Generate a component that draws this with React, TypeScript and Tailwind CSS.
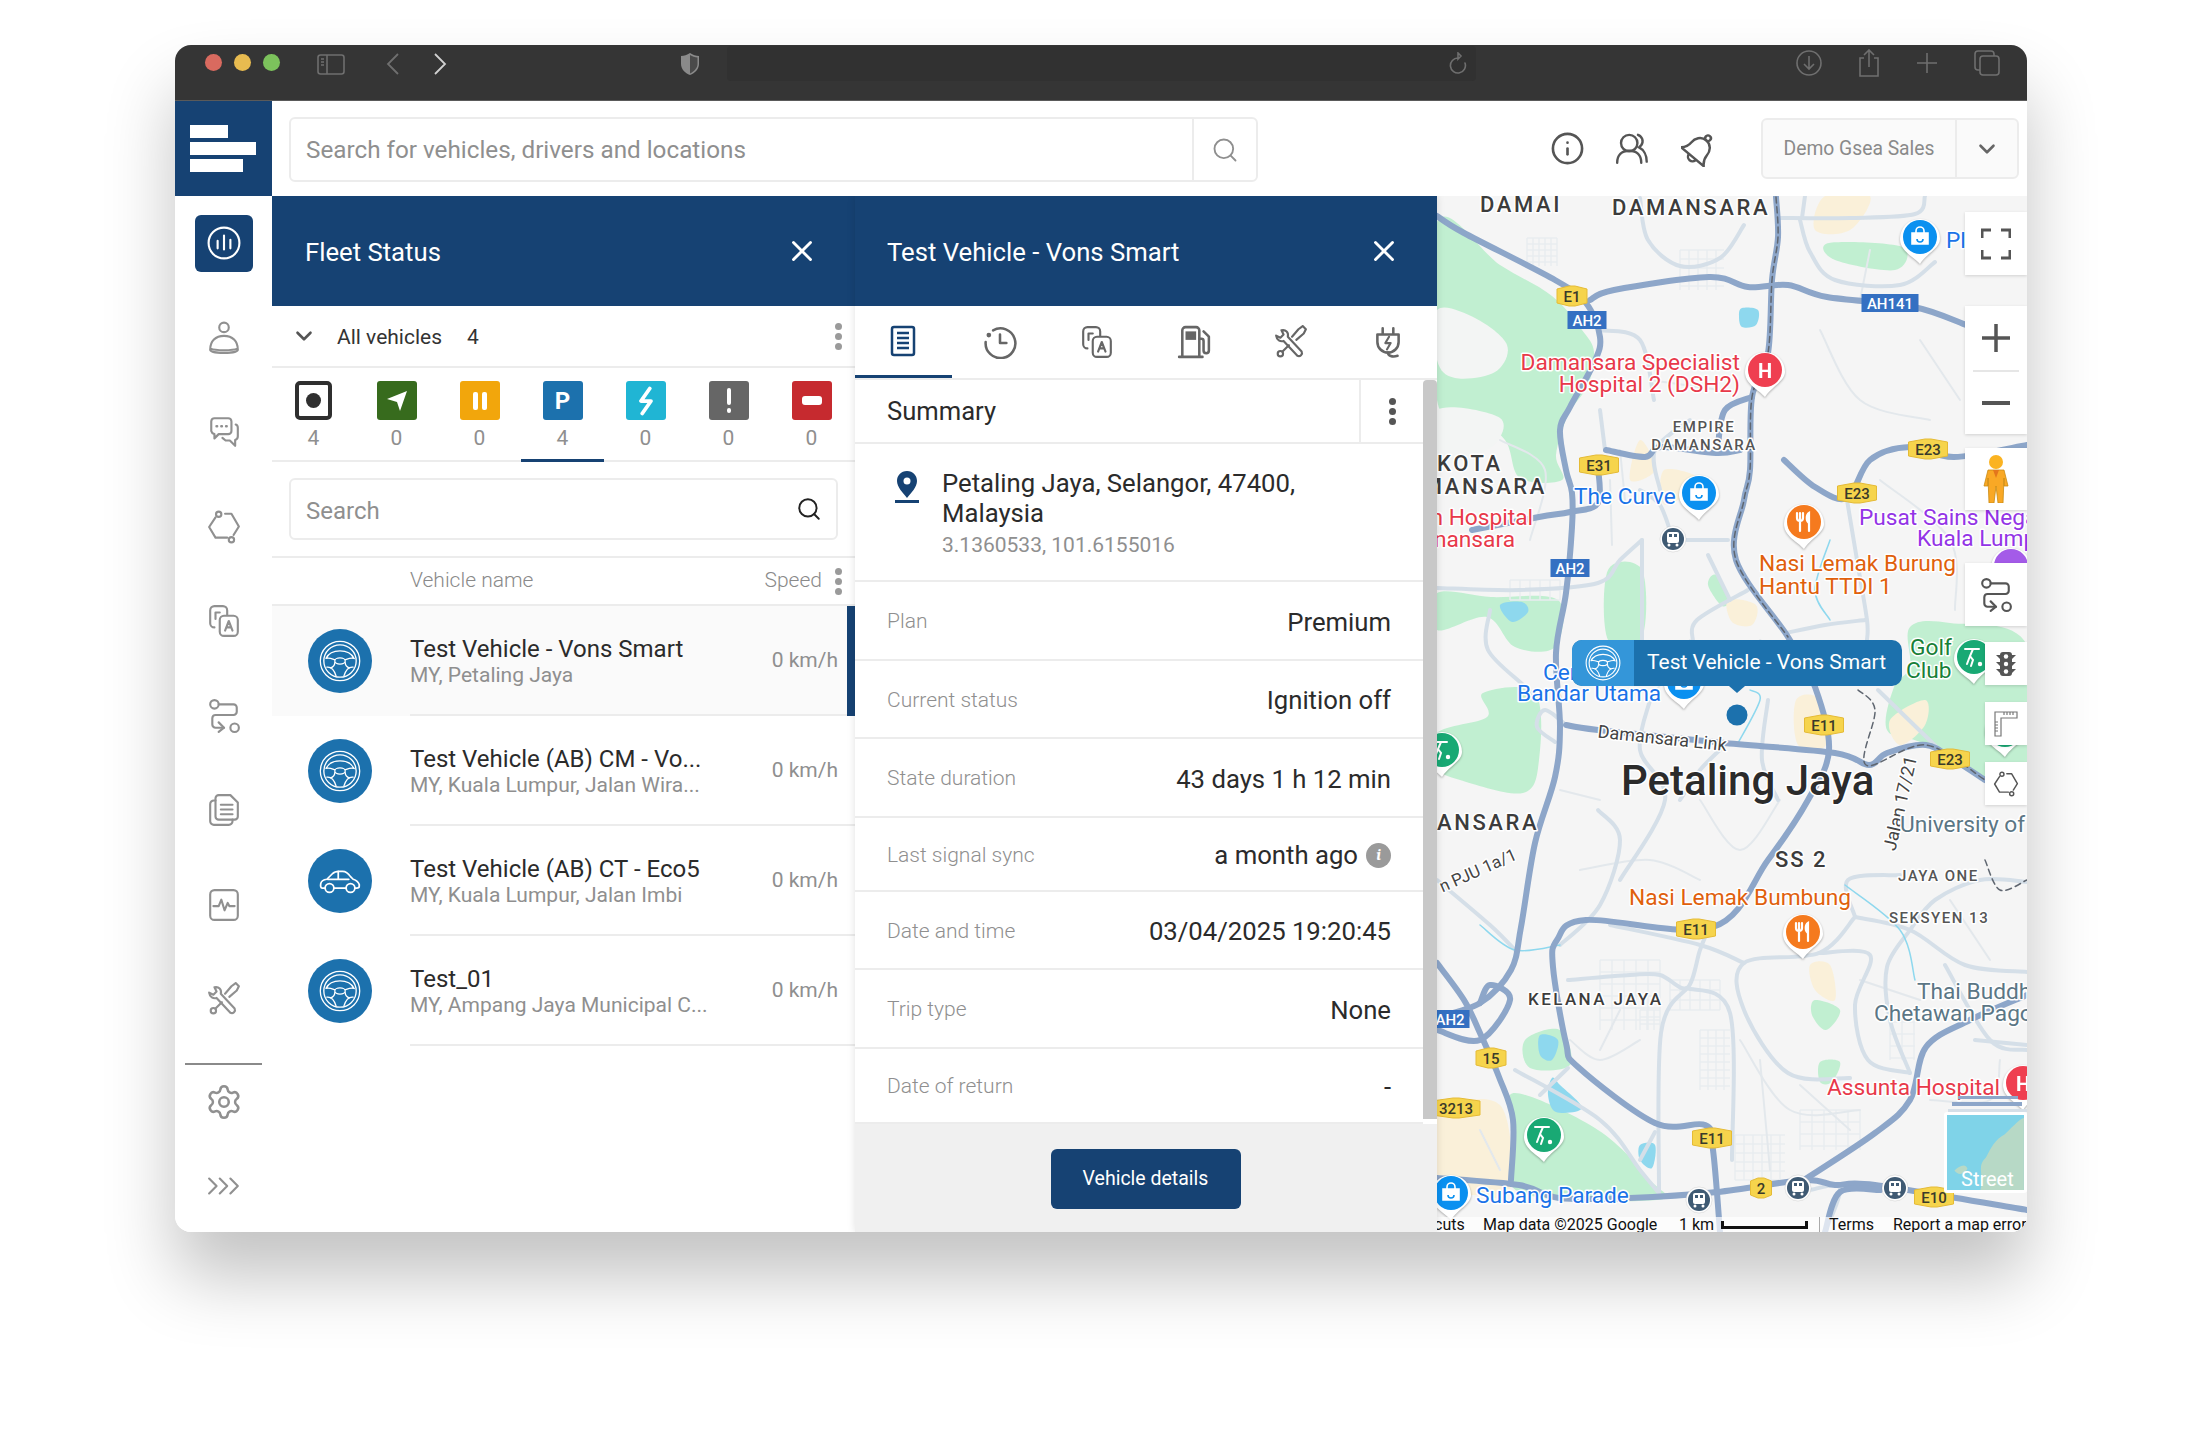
import { ChevronDown, Info, Search, Settings, X } from 'lucide-react';
import type { ReactNode } from 'react';

type Pt = [number, number];

// catmull-rom so the map roads don't look like polylines
const smooth = (p: Pt[], close = false) => {
  const pts = close ? [p[p.length - 1], ...p, p[0], p[1]] : [p[0], ...p, p[p.length - 1]];
  let d = `M${pts[1][0]} ${pts[1][1]}`;
  for (let i = 1; i < pts.length - 2; i++) {
    const [a, b, c, e] = [pts[i - 1], pts[i], pts[i + 1], pts[i + 2]];
    d += `C${b[0] + (c[0] - a[0]) / 6} ${b[1] + (c[1] - a[1]) / 6} ${c[0] - (e[0] - b[0]) / 6} ${c[1] - (e[1] - b[1]) / 6} ${c[0]} ${c[1]}`;
  }
  return d + (close ? 'Z' : '');
};

const greens: Pt[][] = [
  [[1437, 222], [1500, 265], [1552, 296], [1582, 330], [1594, 352], [1588, 385], [1568, 415], [1556, 455], [1562, 480], [1520, 478], [1505, 440], [1470, 412], [1437, 400]],
  [[1910, 627], [1950, 623], [2027, 645], [2027, 782], [1985, 780], [1922, 743], [1887, 730], [1894, 687], [1910, 667]],
  [[1437, 593], [1491, 597], [1558, 600], [1555, 647], [1515, 647], [1487, 617], [1437, 630]],
  [[1483, 693], [1535, 693], [1539, 760], [1523, 793], [1460, 780], [1437, 767], [1437, 733], [1487, 717]],
  [[1608, 570], [1642, 570], [1642, 637], [1608, 640]],
  [[1515, 1093], [1598, 1130], [1650, 1180], [1657, 1200], [1519, 1192], [1515, 1130]],
  [[1829, 243], [1902, 247], [1895, 270], [1835, 260]],
  [[1716, 575], [1730, 598], [1722, 606], [1708, 585]],
  [[1815, 1000], [1840, 1010], [1826, 1030], [1812, 1015]],
  [[1820, 1062], [1840, 1062], [1832, 1082], [1820, 1082]],
  [[1525, 1040], [1560, 1030], [1570, 1065], [1530, 1068]],
];

const blobs: Pt[][] = [
  [[1437, 310], [1475, 318], [1507, 345], [1495, 372], [1455, 378], [1437, 360]],
  [[1437, 410], [1500, 418], [1490, 448], [1437, 462]],
];

const water: Pt[][] = [
  [[1742, 308], [1758, 310], [1756, 325], [1742, 327], [1739, 316]],
  [[1500, 605], [1522, 602], [1528, 612], [1512, 622]],
  [[1552, 1078], [1560, 1085], [1582, 1108], [1556, 1112], [1548, 1095]],
  [[1540, 1035], [1558, 1040], [1552, 1060], [1540, 1055]],
  [[1640, 1145], [1655, 1145], [1652, 1168], [1640, 1160]],
];

const minorRoads: Pt[][] = [
  [[1640, 198], [1648, 240], [1680, 266], [1720, 258], [1744, 225]],
  [[1778, 218], [1850, 218], [1915, 214], [1925, 196]],
  [[1805, 196], [1802, 218]],
  [[1800, 220], [1810, 252], [1835, 280], [1900, 285], [1935, 262]],
  [[1673, 540], [1728, 540]],
  [[1642, 540], [1620, 560], [1598, 583], [1520, 590], [1437, 588]],
  [[1673, 540], [1660, 505], [1640, 490]],
  [[1748, 590], [1697, 620], [1693, 642]],
  [[1786, 633], [1825, 625], [1865, 620]],
  [[1847, 500], [1857, 560], [1867, 620], [1867, 640]],
  [[1642, 540], [1642, 640]],
  [[1708, 555], [1730, 600]],
  [[1490, 610], [1488, 650], [1528, 690], [1525, 700]],
  [[1566, 725], [1545, 710], [1537, 727], [1555, 742]],
  [[1650, 700], [1640, 750], [1665, 800], [1620, 880]],
  [[1725, 745], [1700, 770], [1680, 800]],
  [[1598, 810], [1620, 840], [1600, 905], [1560, 945]],
  [[1878, 690], [1950, 760]],
  [[1768, 700], [1762, 760], [1778, 800]],
  [[1687, 988], [1661, 1033], [1659, 1193]],
  [[1687, 988], [1730, 1013], [1732, 1160]],
  [[1568, 980], [1630, 975], [1660, 975], [1687, 988], [1700, 950], [1708, 930]],
  [[1855, 917], [1819, 953], [1744, 963], [1744, 1010], [1788, 1073], [1850, 1078]],
  [[1744, 963], [1700, 945], [1610, 925]],
  [[1819, 953], [1870, 955], [1855, 1005], [1868, 1060], [1910, 1073]],
  [[1910, 930], [1887, 967], [1890, 1020], [1910, 1073]],
  [[1855, 917], [1910, 930], [1965, 965], [2027, 972]],
  [[1910, 930], [1935, 900], [1980, 880], [2027, 882]],
  [[1855, 917], [1848, 880], [1900, 875]],
  [[1975, 1040], [2027, 1045]],
  [[1945, 965], [1990, 1040], [2027, 1050]],
  [[1515, 1070], [1600, 1120], [1640, 1170], [1658, 1192]],
  [[1437, 880], [1490, 925], [1515, 950]],
  [[1540, 1095], [1568, 1068]],
  [[1640, 1160], [1655, 1132]],
  [[1810, 1190], [1840, 1188], [1825, 1232]],
  [[1600, 330], [1640, 340], [1654, 400]],
  [[1600, 410], [1605, 450]],
  [[1690, 420], [1655, 450], [1660, 490]],
];

// thin back streets, just texture
const lanes: Pt[][] = [
  [[1500, 440], [1545, 470], [1530, 540]],
  [[1610, 480], [1612, 545]],
  [[1760, 640], [1800, 660], [1870, 650]],
  [[1690, 640], [1650, 700]],
  [[1700, 800], [1740, 850], [1780, 800]],
  [[1600, 800], [1560, 790]],
  [[1580, 870], [1650, 860], [1700, 880]],
  [[1640, 1040], [1600, 1060], [1570, 1040]],
  [[1740, 1040], [1790, 1110], [1860, 1110]],
  [[1760, 1060], [1770, 1170]],
  [[1800, 1085], [1850, 1130]],
  [[1930, 1100], [1990, 1100], [2000, 1060]],
  [[1860, 980], [1920, 1000]],
  [[1950, 900], [1990, 960]],
  [[1620, 1010], [1600, 1050]],
  [[1480, 1130], [1500, 1170]],
  [[1820, 330], [1860, 400], [1930, 420]],
  [[1870, 250], [1860, 300]],
  [[1920, 340], [1960, 400]],
  [[1650, 380], [1720, 390]],
  [[1620, 450], [1625, 500]],
  [[1880, 480], [1950, 540], [1955, 610]],
];

const majorRoads: Pt[][] = [
  [[1437, 216], [1464, 233], [1555, 280], [1586, 303], [1600, 337], [1594, 363], [1570, 407], [1560, 430], [1566, 470], [1572, 493], [1572, 527], [1566, 593], [1556, 653], [1560, 727], [1555, 777], [1535, 843], [1521, 927], [1511, 970], [1480, 1003], [1437, 1017]],
  [[1590, 300], [1614, 290], [1709, 277], [1748, 287], [1788, 285], [1827, 297], [1914, 307], [1966, 325]],
  [[1776, 197], [1778, 237], [1772, 280], [1768, 353], [1752, 397], [1750, 470], [1744, 500], [1736, 560], [1788, 637], [1815, 687], [1829, 750], [1808, 800], [1768, 860], [1713, 927], [1586, 920], [1557, 940], [1553, 967], [1566, 1043], [1578, 1067], [1655, 1123], [1705, 1125], [1713, 1150], [1720, 1232]],
  [[1566, 725], [1598, 730], [1725, 743], [1835, 753], [1869, 765], [1887, 753], [1926, 745], [1954, 760], [1985, 780]],
  [[1437, 1178], [1519, 1185], [1559, 1198], [1630, 1198], [1717, 1192], [1804, 1180], [1835, 1185], [1875, 1185], [2027, 1210]],
  [[1804, 1180], [1875, 1133], [1910, 1100], [1926, 1047], [1970, 1020], [2027, 995]],
  [[1784, 460], [1815, 487], [1847, 498], [1870, 460], [1910, 447], [1954, 457], [2027, 445]],
  [[1472, 530], [1539, 517], [1570, 512], [1598, 503], [1598, 467]],
  [[1606, 450], [1645, 457], [1661, 447], [1716, 453], [1740, 450]],
  [[1752, 397], [1725, 410], [1718, 445]],
  [[1437, 963], [1464, 1000], [1480, 1033], [1499, 1077], [1513, 1120], [1511, 1180]],
  [[1825, 1232], [1840, 1192], [1880, 1190]],
  [[1437, 1030], [1480, 1040], [1510, 1000], [1490, 985], [1480, 1003]],
];

const rails: Pt[][] = [
  [[1776, 197], [1778, 237], [1772, 280], [1768, 353], [1752, 397], [1750, 470], [1744, 500], [1736, 560], [1788, 637]],
  [[1858, 690], [1875, 710], [1866, 765], [1926, 745], [1985, 780]],
  [[1985, 860], [2000, 890], [2027, 880]],
];

const grids: [number, number, number, number, number][] = [
  [1527, 238, 30, 28, 6],
  [1680, 250, 44, 40, 9],
  [1510, 580, 50, 20, 10],
  [1700, 1030, 30, 60, 8],
  [1670, 980, 50, 30, 10],
  [1600, 960, 60, 70, 12],
  [1735, 1135, 50, 45, 9],
  [1800, 1110, 60, 40, 12],
  [1890, 1010, 25, 50, 12],
  [1640, 1010, 20, 20, 7],
];

const tans: Pt[][] = [
  [[1728, 600], [1756, 605], [1752, 625], [1732, 622]],
  [[1796, 700], [1820, 700], [1826, 745], [1798, 745]],
  [[1810, 965], [1830, 965], [1835, 1000], [1815, 990]],
  [[1890, 720], [1925, 700], [1925, 725], [1900, 745]],
  [[1664, 470], [1700, 480], [1665, 505]],
  [[1437, 1115], [1500, 1105], [1510, 1190], [1475, 1195], [1437, 1190]],
  [[1825, 196], [1870, 196], [1850, 230], [1815, 230]],
  [[1640, 440], [1655, 470], [1630, 480]],
];

const MapText = ({ x, y, s, c, size = 22.700, anchor = 'start', sp = 0, w = 400, rot = 0 }: { x: number; y: number; s: string; c: string; size?: number; anchor?: 'start' | 'end' | 'middle'; sp?: number; w?: number; rot?: number }) => (
  <text
    x={x}
    y={y}
    fill={c}
    fontSize={size}
    textAnchor={anchor}
    letterSpacing={sp}
    fontWeight={w}
    dominantBaseline="central"
    stroke="#ffffff"
    strokeWidth={3}
    paintOrder="stroke"
    strokeLinejoin="round"
    transform={rot ? `rotate(${rot} ${x} ${y})` : undefined}
  >
    {s}
  </text>
);

const Shield = ({ x, y, s, blue }: { x: number; y: number; s: string; blue?: boolean }) => {
  const w = s.length * 9 + 12;
  return (
    <g>
      {blue ? (
        <rect x={x - w / 2} y={y - 9} width={w} height={18} fill="#3470c2" />
      ) : (
        <path d={`M${x - w / 2} ${y - 7}L${x - 3} ${y - 10}L${x + 3} ${y - 10}L${x + w / 2} ${y - 7}V${y + 7}L${x + 3} ${y + 10}L${x - 3} ${y + 10}L${x - w / 2} ${y + 7}Z`} fill="#f6d44c" stroke="#e5bb36" />
      )}
      <text x={x} y={y + 1} fontSize={15} fontWeight={500} textAnchor="middle" dominantBaseline="central" fill={blue ? '#ffffff' : '#3a3a2a'}>
        {s}
      </text>
    </g>
  );
};

const Pin = ({ x, y, c, kind, r = 17 }: { x: number; y: number; c: string; kind: string; r?: number }) => (
  <g className="drop-shadow-[0_1px_1px_rgba(0,0,0,0.3)]">
    <path d={`M${x - r - 3} ${y + 2}a${r + 3} ${r + 3} 0 1 1 ${2 * r + 6} 0c0 9 -${r - 3} 15 -${r + 3} ${r + 8}c-6 -7 -${r + 3} -13 -${r + 3} -${r + 8}Z`} fill="#ffffff" />
    <circle cx={x} cy={y} r={r} fill={c} />
    {kind === 'bag' && (
      <g fill="none" stroke="#fff" strokeWidth={1.6}>
        <path d={`M${x - 8} ${y - 4}h16v11h-16z`} fill="#fff" />
        <path d={`M${x - 4} ${y - 4}v-2a4 4 0 0 1 8 0v2`} />
        <path d={`M${x - 3} ${y + 2}a3 3 0 0 0 6 0`} stroke={c} />
      </g>
    )}
    {kind === 'h' && (
      <text x={x} y={y + 1} fontSize={20} fontWeight={700} fill="#fff" textAnchor="middle" dominantBaseline="central">
        H
      </text>
    )}
    {kind === 'food' && (
      <g fill="none" stroke="#fff" strokeWidth={2.2} strokeLinecap="round">
        <path d={`M${x - 7} ${y - 9}v5a3 3 0 0 0 6 0v-5M${x - 4} ${y - 9}v18`} />
        <path d={`M${x + 5} ${y + 9}v-18c-3 2-3 8 0 10`} fill="#fff" />
      </g>
    )}
    {kind === 'golf' && (
      <g fill="none" stroke="#fff" strokeWidth={2} strokeLinecap="round">
        <path d={`M${x - 9} ${y - 8}h14M${x - 1} ${y - 8}l-3 7 3 4-2 6M${x - 4} ${y - 1}l-3 8`} />
        <circle cx={x + 6} cy={y + 7} r={1.2} fill="#fff" />
      </g>
    )}
  </g>
);

const Metro = ({ x, y }: { x: number; y: number }) => (
  <g>
    <circle cx={x} cy={y} r={13} fill="#fff" stroke="#00000018" />
    <circle cx={x} cy={y} r={11} fill="#3f5a73" />
    <rect x={x - 6} y={y - 7} width={12} height={11} rx={2} fill="#fff" />
    <rect x={x - 4} y={y - 5} width={3} height={3} fill="#3f5a73" />
    <rect x={x + 1} y={y - 5} width={3} height={3} fill="#3f5a73" />
    <circle cx={x - 4} cy={y + 6} r={1.5} fill="#fff" />
    <circle cx={x + 4} cy={y + 6} r={1.5} fill="#fff" />
  </g>
);

const MapDrawing = () => (
  <svg viewBox="1437 196 590 1036" className="absolute inset-0 h-full w-full">
    <rect x="1437" y="196" width="590" height="1036" fill="#f5f5f5" />
    {greens.map((g, i) => <path key={i} d={smooth(g, true)} fill="#c1efd1" />)}
    {blobs.map((g, i) => <path key={i} d={smooth(g, true)} fill="#f3f5f4" />)}
    {tans.map((g, i) => <path key={i} d={smooth(g, true)} fill="#faf0d9" />)}
    {water.map((g, i) => <path key={i} d={smooth(g, true)} fill="#8ed8ee" />)}
    {grids.map(([x, y, w, h, st], i) => (
      <g key={i} stroke="#e9ecef" strokeWidth={1.5}>
        {Array.from({ length: Math.floor(w / st) + 1 }, (_, k) => <line key={k} x1={x + k * st} y1={y} x2={x + k * st} y2={y + h} />)}
        {Array.from({ length: Math.floor(h / st) + 1 }, (_, k) => <line key={k} x1={x} y1={y + k * st} x2={x + w} y2={y + k * st} />)}
      </g>
    ))}
    <g fill="none" strokeLinecap="round" strokeLinejoin="round">
      {lanes.map((r, i) => <path key={i} d={smooth(r)} stroke="#e3e8ec" strokeWidth={2} />)}
      {minorRoads.map((r, i) => <path key={i} d={smooth(r)} stroke="#d5dfe8" strokeWidth={4} />)}
      <path d={smooth([[1480, 925], [1515, 950], [1560, 945]])} stroke="#8ed8ee" strokeWidth={1.5} />
      <path d={smooth([[1737, 745], [1760, 700], [1750, 690]])} stroke="#8ed8ee" strokeWidth={1.5} />
      <path d={smooth([[1830, 620], [1815, 590], [1830, 540]])} stroke="#8ed8ee" strokeWidth={1.5} />
      <path d={smooth([[1845, 885], [1900, 930], [1915, 980]])} stroke="#8ed8ee" strokeWidth={1.5} />
      {majorRoads.map((r, i) => <path key={i} d={smooth(r)} stroke="#8da6c9" strokeWidth={6} />)}
      {rails.map((r, i) => <path key={i} d={smooth(r)} stroke="#5f6670" strokeWidth={1.5} strokeDasharray="6 4" />)}
    </g>

    <MapText x={1480} y={204} s="DAMAI" c="#3c3c3c" size={22} sp={2.6} w={500} />
    <MapText x={1612} y={207} s="DAMANSARA" c="#3c3c3c" size={22} sp={2.6} w={500} />
    <MapText x={1740} y={362} s="Damansara Specialist" c="#e8394a" anchor="end" />
    <MapText x={1740} y={384} s="Hospital 2 (DSH2)" c="#e8394a" anchor="end" />
    <MapText x={1704} y={427} s="EMPIRE" c="#555" size={15} anchor="middle" sp={1.5} w={500} />
    <MapText x={1704} y={445} s="DAMANSARA" c="#555" size={15} anchor="middle" sp={1.5} w={500} />
    <MapText x={1946} y={240} s="Pl" c="#1a73e8" />
    <MapText x={1437} y={463} s="KOTA" c="#3c3c3c" size={22} sp={2.6} w={500} />
    <MapText x={1547} y={486} s="MANSARA" c="#3c3c3c" size={22} sp={2.6} w={500} anchor="end" />
    <MapText x={1533} y={517} s="n Hospital" c="#e8394a" anchor="end" />
    <MapText x={1515} y={539} s="nansara" c="#e8394a" anchor="end" />
    <MapText x={1574} y={496} s="The Curve" c="#1a73e8" />
    <MapText x={1859} y={517} s="Pusat Sains Negara" c="#9334e6" />
    <MapText x={1917} y={538} s="Kuala Lumpur" c="#9334e6" />
    <MapText x={1759} y={563} s="Nasi Lemak Burung" c="#e0600c" />
    <MapText x={1759} y={586} s="Hantu TTDI 1" c="#e0600c" />
    <MapText x={1910} y={647} s="Golf" c="#188038" />
    <MapText x={1906} y={670} s="Club" c="#188038" />
    <MapText x={1543} y={672} s="Cen" c="#1a73e8" />
    <MapText x={1517} y={693} s="Bandar Utama" c="#1a73e8" />
    <MapText x={1598} y={731} s="Damansara Link" c="#444" size={18} rot={6} />
    <MapText x={1621} y={780} s="Petaling Jaya" c="#2b2b2b" size={42} w={500} />
    <MapText x={1889} y={850} s="Jalan 17/21" c="#444" size={18} rot={-77} />
    <MapText x={1775} y={859} s="SS 2" c="#3c3c3c" size={22} sp={2} w={500} />
    <MapText x={1900} y={824} s="University of Malaya" c="#5b7685" />
    <MapText x={1437} y={822} s="ANSARA" c="#3c3c3c" size={22} sp={2.6} w={500} />
    <MapText x={1440} y={887} s="n PJU 1a/1" c="#444" size={17} rot={-24} />
    <MapText x={1898} y={876} s="JAYA ONE" c="#555" size={15} sp={1.5} w={500} />
    <MapText x={1629} y={897} s="Nasi Lemak Bumbung" c="#e0600c" />
    <MapText x={1889} y={918} s="SEKSYEN 13" c="#555" size={15} sp={1.5} w={500} />
    <MapText x={1528} y={999} s="KELANA JAYA" c="#3c3c3c" size={17} sp={2.4} w={500} />
    <MapText x={1917} y={991} s="Thai Buddhist" c="#5b7685" />
    <MapText x={1874} y={1013} s="Chetawan Pagoda" c="#5b7685" />
    <MapText x={1827} y={1087} s="Assunta Hospital" c="#e8394a" />
    <MapText x={1476} y={1195} s="Subang Parade" c="#1a73e8" />

    <Shield x={1572} y={296} s="E1" />
    <Shield x={1587} y={320} s="AH2" blue />
    <Shield x={1890} y={303} s="AH141" blue />
    <Shield x={1928} y={449} s="E23" />
    <Shield x={1599} y={465} s="E31" />
    <Shield x={1857} y={493} s="E23" />
    <Shield x={1570} y={568} s="AH2" blue />
    <Shield x={1824} y={725} s="E11" />
    <Shield x={1950} y={759} s="E23" />
    <Shield x={1696} y={929} s="E11" />
    <Shield x={1450} y={1019} s="AH2" blue />
    <Shield x={1491} y={1058} s="15" />
    <Shield x={1456} y={1108} s="3213" />
    <Shield x={1712} y={1138} s="E11" />
    <Shield x={1761} y={1188} s="2" />
    <Shield x={1934} y={1197} s="E10" />

    <Pin x={2011} y={566} c="#a45be8" kind="" />
    <Pin x={1920} y={237} c="#0a90f0" kind="bag" />
    <Pin x={1765} y={370} c="#ef3f50" kind="h" />
    <Pin x={1699} y={493} c="#0a90f0" kind="bag" />
    <Pin x={1804} y={522} c="#f57a1e" kind="food" />
    <Pin x={1803} y={932} c="#f57a1e" kind="food" />
    <Pin x={1544} y={1135} c="#19a974" kind="golf" />
    <Pin x={1442} y={750} c="#19a974" kind="golf" />
    <Pin x={1974} y={657} c="#19a974" kind="golf" />
    <Pin x={1684} y={682} c="#0a90f0" kind="bag" />
    <Pin x={1451} y={1193} c="#0a90f0" kind="bag" />
    <Pin x={2023} y={1083} c="#ef3f50" kind="h" />
    <Pin x={2005} y={730} c="#19a974" kind="" />
    <Metro x={1673} y={539} />
    <Metro x={1699} y={1200} />
    <Metro x={1798} y={1188} />
    <Metro x={1895} y={1188} />

    <path d="M1729 686h16l-8 7z" fill="#1c71ad" />
    <circle cx="1737" cy="715" r="10.5" fill="#1c71ad" />
  </svg>
);

const Wheel = ({ className }: { className: string }) => (
  <svg viewBox="0 0 48 48" fill="none" stroke="#fff" strokeWidth={1.5} strokeLinecap="round" className={className}>
    <circle cx="24" cy="24" r="22.5" />
    <circle cx="24" cy="24" r="18.5" />
    <path d="M8 21c3-6 9-8.500 16-8.500S37 15 40 21c-4-1-7 .5-10 1.500M8 21c4-1 7 .5 10 1.500" />
    <ellipse cx="24" cy="24" rx="6" ry="3.500" />
    <path d="M9 31c4-.5 8 2 10.500 10M39 31c-4-.5-8 2-10.500 10M18 26c0 3-2 5-5 6M30 26c0 3 2 5 5 6" />
  </svg>
);

const Car = ({ className }: { className: string }) => (
  <svg viewBox="0 0 48 28" fill="none" stroke="#fff" strokeWidth={2} strokeLinecap="round" strokeLinejoin="round" className={className}>
    <path d="M7 22H3.500C2 22 1.500 20 2 17c.5-3 3-4.500 7-5l6-6c2-2 4-3 8-3h4c4 0 6 1.500 9 6l3 3c3 1 6 3 7 6v2c0 1.500-1 2-3 2h-2M17 22h14" />
    <circle cx="12" cy="22" r="5" />
    <circle cx="36" cy="22" r="5" />
    <path d="M10 12h24M22 3v9" />
  </svg>
);

// gray line icons, all on a 32 grid
const Ic = ({ children, className = 'h-[34px] w-[34px]', sw = 2 }: { children: ReactNode; className?: string; sw?: number }) => (
  <svg viewBox="0 0 32 32" fill="none" stroke="currentColor" strokeWidth={sw} strokeLinecap="round" strokeLinejoin="round" className={className}>
    {children}
  </svg>
);

const IconUser = () => (
  <Ic>
    <circle cx="16" cy="6" r="4.500" />
    <path d="M3 27c0-8 5-13 13-13s13 5 13 13c0 2-6 3-13 3S3 29 3 27ZM3.500 26c4 2 21 2 25 0" />
  </Ic>
);
const IconChat = () => (
  <Ic>
    <path d="M7 3h13a3 3 0 0 1 3 3v9a3 3 0 0 1-3 3h-9l-4 4v-4a4 4 0 0 1-3-3V6a3 3 0 0 1 3-3Z" />
    <path d="M27 9c1.500.5 2 1.500 2 3v8c0 2-1 3-2.500 3.500V29l-5-5h-4l-3-2.500" />
    <path d="M9 10.500h.5M13.500 10.500h.5M18 10.500h.5" strokeWidth={2.400} />
  </Ic>
);
const PolyPaths = () => (
  <>
    <circle cx="11" cy="4" r="2.500" />
    <circle cx="23" cy="28" r="2.500" />
    <path d="M17 3.500h6l7 12-5 8M8 7 2 16l6 10h11" />
  </>
);
const IconPoly = () => <Ic><PolyPaths /></Ic>;
const IconDocs = () => (
  <Ic>
    <path d="M7 22a4 4 0 0 1-4-4V6a4 4 0 0 1 4-4h8a4 4 0 0 1 4 4v4" />
    <rect x="12" y="11" width="17" height="19" rx="4" />
    <path d="m17 25 3.500-9 3.500 9M18.500 22h4" />
    <path d="M8 14V8h4" />
  </Ic>
);
const IconRoute = () => (
  <Ic>
    <circle cx="7" cy="5" r="4" />
    <path d="M11 5h14a3 3 0 0 1 3 3v4a3 3 0 0 1-3 3H8a3 3 0 0 0-3 3v6a3 3 0 0 0 3 3h8" />
    <path d="m11 22 5 5-5 4" />
    <circle cx="26" cy="27" r="4" />
  </Ic>
);
const IconPapers = () => (
  <Ic>
    <path d="M8 7H6.500A3.500 3.500 0 0 0 3 10.500v16A3.500 3.500 0 0 0 6.500 30h14a3.500 3.500 0 0 0 3.500-3.500V25" />
    <path d="M8 5a3 3 0 0 1 3-3h11l7 7v13a3 3 0 0 1-3 3H11a3 3 0 0 1-3-3V5Z" />
    <path d="M13 11h11M13 15.500h11M13 20h11" />
  </Ic>
);
const IconPulse = () => (
  <Ic>
    <rect x="3" y="2" width="26" height="28" rx="4" />
    <path d="M6 17h5l2.500-6 3 10 3-7 1.500 3h5" />
  </Ic>
);
const IconTools = () => (
  <Ic>
    <path d="M13 11 26 25a3 3 0 0 1-4 4L9 15c-3 1-6.500-1-7-5l4 2 3-3-2-4c4-1 7 2 6 6Z" />
    <path d="m17 11 6-7 4-3 3 3-2 4-7 6M14 19l-6 6" />
    <circle cx="6" cy="27" r="2.500" />
  </Ic>
);
const IconChart = () => (
  <svg viewBox="0 0 32 32" fill="none" stroke="#fff" strokeWidth={2} strokeLinecap="round" className="h-[34px] w-[34px]">
    <circle cx="16" cy="16" r="14.500" />
    <path d="M10 14v7M16 9v13M22 13v8" />
  </svg>
);
const IconChevrons = () => (
  <Ic sw={2}>
    <path d="m2 9 7 7-7 7M12 9l7 7-7 7M22 9l7 7-7 7" />
  </Ic>
);
const IconPlug = () => (
  <Ic sw={2.400}>
    <path d="M11 3v6M21 3v6M6 9h20v7a10 10 0 0 1-20 0V9Z" />
    <path d="m17 11-3.500 6h5L15 23" strokeWidth={2} />
    <path d="M16 26c0 3 4 4.500 9 3" />
  </Ic>
);
const IconClock = () => (
  <Ic sw={2.400}>
    <path d="M9.500 5A14 14 0 1 1 2.500 16" />
    <circle cx="5.500" cy="9.500" r="2.200" fill="currentColor" stroke="none" />
    <path d="M16 9v8h6" />
  </Ic>
);
const IconPump = () => (
  <Ic sw={2.400}>
    <path d="M5 29V5a3 3 0 0 1 3-3h10a3 3 0 0 1 3 3v24M2 30h22" />
    <rect x="8" y="6" width="10" height="8" fill="currentColor" stroke="none" />
    <path d="M21 13h2a2 2 0 0 1 2 2v9a2.500 2.500 0 0 0 5 0V11l-5-5" />
  </Ic>
);
const Dots = ({ className = 'bg-[#9a9a9a]' }: { className?: string }) => (
  <div className="flex flex-col gap-[3px]">
    <span className={`h-[7px] w-[7px] rounded-full ${className}`} />
    <span className={`h-[7px] w-[7px] rounded-full ${className}`} />
    <span className={`h-[7px] w-[7px] rounded-full ${className}`} />
  </div>
);

const sideIcons = [IconUser, IconChat, IconPoly, IconDocs, IconRoute, IconPapers, IconPulse, IconTools];

const statuses = [
  { count: 4, box: 'bg-white border-[4px] border-[#2f2f2f] rounded-[5px] !w-[37px]', el: <span className="h-[15px] w-[15px] rounded-full bg-[#2f2f2f]" /> },
  { count: 0, box: 'bg-[#376b1d]', el: <svg viewBox="0 0 24 24" className="h-[24px] w-[24px]" fill="#fff"><path d="M2 10 22 2l-7 20-3-9Z" /></svg> },
  { count: 0, box: 'bg-[#f2a60c]', el: <div className="flex gap-[4px]"><span className="h-[18px] w-[5px] rounded-[2px] bg-white" /><span className="h-[18px] w-[5px] rounded-[2px] bg-white" /></div> },
  { count: 4, box: 'bg-[#1c71ad] text-white text-[24px] font-bold', el: <span>P</span> },
  { count: 0, box: 'bg-[#20b5d4]', el: <svg viewBox="0 0 24 24" className="h-[30px] w-[30px]" fill="none" stroke="#fff" strokeWidth={3} strokeLinecap="round" strokeLinejoin="round"><path d="M15 2 8 12h8L9 22" /></svg> },
  { count: 0, box: 'bg-[#666666]', el: <div className="flex flex-col items-center gap-[3px]"><span className="h-[17px] w-[4px] rounded-[2px] bg-white" /><span className="h-[5px] w-[4px] rounded-[2px] bg-white" /></div> },
  { count: 0, box: 'bg-[#c62a2f]', el: <span className="h-[9px] w-[20px] rounded-[3px] bg-white" /> },
];

const vehicles = [
  { name: 'Test Vehicle - Vons Smart', place: 'MY, Petaling Jaya', car: false, active: true },
  { name: 'Test Vehicle (AB) CM - Vo...', place: 'MY, Kuala Lumpur, Jalan Wira...', car: false, active: false },
  { name: 'Test Vehicle (AB) CT - Eco5', place: 'MY, Kuala Lumpur, Jalan Imbi', car: true, active: false },
  { name: 'Test_01', place: 'MY, Ampang Jaya Municipal C...', car: false, active: false },
];

const details = [
  { label: 'Plan', value: 'Premium', h: 'h-[79px]' },
  { label: 'Current status', value: 'Ignition off', h: 'h-[78px]' },
  { label: 'State duration', value: '43 days 1 h 12 min', h: 'h-[79px]' },
  { label: 'Last signal sync', value: 'a month ago', h: 'h-[74px]', info: true },
  { label: 'Date and time', value: '03/04/2025 19:20:45', h: 'h-[78px]' },
  { label: 'Trip type', value: 'None', h: 'h-[79px]' },
  { label: 'Date of return', value: '-', h: 'h-[75px]' },
];

const TitleBar = () => (
  <div className="relative flex h-[56px] items-start border-b border-[#5a5a5a] bg-[#353535] pl-[30px] pt-[9px] text-[#6f6f6f]">
    <div className="flex gap-[12px]">
      <span className="h-[17px] w-[17px] rounded-full bg-[#d96a5f]" />
      <span className="h-[17px] w-[17px] rounded-full bg-[#e8bb50]" />
      <span className="h-[17px] w-[17px] rounded-full bg-[#7cc25c]" />
    </div>
    <svg viewBox="0 0 28 21" fill="none" stroke="currentColor" strokeWidth={1.600} className="ml-[37px] h-[21px] w-[28px]">
      <rect x="1" y="1" width="26" height="19" rx="2.500" />
      <path d="M10 1v19M4 5h3M4 8h3M4 11h3" />
    </svg>
    <svg viewBox="0 0 14 22" fill="none" stroke="currentColor" strokeWidth={1.800} className="ml-[41px] -mt-[1px] h-[22px] w-[14px]"><path d="M12 1 2 11l10 10" /></svg>
    <svg viewBox="0 0 14 22" fill="none" stroke="#d0d0d0" strokeWidth={1.800} className="ml-[33px] -mt-[1px] h-[22px] w-[14px]"><path d="m2 1 10 10L2 21" /></svg>
    <svg viewBox="0 0 20 24" className="ml-[233px] -mt-[2px] h-[24px] w-[20px]"><path d="M10 1c3 2 6 3 9 3v8c0 5-4 9-9 11-5-2-9-6-9-11V4c3 0 6-1 9-3Z" fill="#8a8a8a" /><path d="M10 3c2.500 1.500 5 2.500 7.500 2.500V12c0 4-3.500 7.500-7.500 9.500Z" fill="#4a4a4a" /></svg>
    <div className="absolute left-[552px] top-[1px] flex h-[35px] w-[749px] items-center justify-end rounded-[4px] bg-[#313131] pr-[8px]">
      <svg viewBox="0 0 20 24" fill="none" stroke="currentColor" strokeWidth={1.600} strokeLinecap="round" className="h-[24px] w-[20px]"><path d="M10 6a7.500 7.500 0 1 0 7 5M10 1v6l3-3z" /></svg>
    </div>
    <div className="absolute left-[1621px] top-[4px] flex items-center gap-[36px]">
      <svg viewBox="0 0 26 26" fill="none" stroke="currentColor" strokeWidth={1.600} className="h-[26px] w-[26px]"><circle cx="13" cy="13" r="12" /><path d="M13 6v13M8 14l5 5 5-5" /></svg>
      <svg viewBox="0 0 22 28" fill="none" stroke="currentColor" strokeWidth={1.600} className="h-[28px] w-[22px]"><path d="M6 9H2v18h18V9h-4M11 18V1M6 6l5-5 5 5" /></svg>
      <svg viewBox="0 0 22 22" fill="none" stroke="currentColor" strokeWidth={1.600} className="h-[22px] w-[22px]"><path d="M11 1v20M1 11h20" /></svg>
      <svg viewBox="0 0 26 26" fill="none" stroke="currentColor" strokeWidth={1.600} className="h-[26px] w-[26px]"><rect x="6" y="6" width="19" height="19" rx="3" /><path d="M6 20H4a3 3 0 0 1-3-3V4a3 3 0 0 1 3-3h13a3 3 0 0 1 3 3v2" /></svg>
    </div>
  </div>
);

const TopBar = () => (
  <div className="flex h-[95px] bg-white">
    <div className="flex w-[97px] flex-col justify-center gap-[4px] bg-[#164273] pl-[15px]">
      <span className="h-[13px] w-[38px] bg-white" />
      <span className="h-[13px] w-[66px] bg-white" />
      <span className="h-[13px] w-[53px] bg-white" />
    </div>
    <div className="ml-[17px] mt-[16px] flex h-[65px] w-[969px] rounded-[6px] border-2 border-[#ececec]">
      <div className="flex flex-1 items-center pl-[15px] pt-[2px] text-[24.250px] text-[#8f8f8f]">Search for vehicles, drivers and locations</div>
      <div className="flex w-[64px] items-center justify-center border-l-2 border-[#ececec] text-[#8f8f8f]">
        <Search size={28} strokeWidth={1.600} />
      </div>
    </div>
    <div className="flex flex-1 items-center text-[#555555]">
      <Info size={35} strokeWidth={1.800} className="ml-[292px]" />
      <svg viewBox="0 0 32 32" fill="none" stroke="currentColor" strokeWidth={2.200} strokeLinecap="round" className="ml-[30px] h-[35px] w-[35px]">
        <circle cx="13" cy="11" r="7.500" />
        <path d="M2 29c0-7 4-11 11-11s11 4 11 11M21 3.500c4 1.500 5.500 6 3 9.500l-2 2c4 2 7 7 7 13" />
      </svg>
      <svg viewBox="0 0 32 32" fill="none" stroke="currentColor" strokeWidth={2.200} strokeLinejoin="round" className="ml-[31px] h-[36px] w-[36px]">
        <g transform="rotate(40 16 16)">
          <path d="M16 6c-6 0-9 5-9 10 0 5-2 7-4 9h26c-2-2-4-4-4-9 0-5-3-10-9-10Z" />
          <circle cx="16" cy="3.500" r="2.500" />
          <path d="M12 25a4 4 0 0 0 8 0" />
        </g>
      </svg>
      <div className="ml-[44px] flex h-[61px] w-[258px] rounded-[6px] border-2 border-[#ececec] bg-[#fafafa] text-[#8a8a8a]">
        <div className="flex w-[192px] items-center justify-center pt-[2px] text-[19.300px]">Demo Gsea Sales</div>
        <div className="flex flex-1 items-center justify-center border-l-2 border-[#ececec] text-[#666666]">
          <ChevronDown size={26} strokeWidth={2.400} />
        </div>
      </div>
    </div>
  </div>
);

const Sidebar = () => (
  <div className="flex w-[97px] flex-col items-center bg-white text-[#909090]">
    <div className="flex h-[94.500px] items-center">
      <div className="flex h-[57px] w-[58px] items-center justify-center rounded-[6px] bg-[#164273]">
        <IconChart />
      </div>
    </div>
    {sideIcons.map((Icon, i) => (
      <div key={i} className="flex h-[94.500px] items-center">
        <Icon />
      </div>
    ))}
    <div className="mt-[16px] h-[2px] w-[77px] bg-[#8a8a8a]" />
    <div className="mt-[19px] flex h-[36px] items-center">
      <Settings size={38} strokeWidth={1.600} />
    </div>
    <div className="mt-[49px]">
      <IconChevrons />
    </div>
  </div>
);

const PanelHeader = ({ title, pad }: { title: string; pad: string }) => (
  <div className={`flex h-[110px] items-center justify-between bg-[#164273] pr-[36px] text-white ${pad}`}>
    <span className="mt-[2px] text-[25.700px]">{title}</span>
    <X size={34} strokeWidth={2} />
  </div>
);

const FleetPanel = () => (
  <div className="flex w-[583px] flex-col bg-white">
    <PanelHeader title="Fleet Status" pad="pl-[33px]" />
    <div className="flex h-[62px] items-center border-b-2 border-[#ececec] pl-[19px] pr-[13px] text-[21px] text-[#333333]">
      <ChevronDown size={26} strokeWidth={2.400} className="text-[#555555]" />
      <span className="ml-[20px] mt-[3px]">All vehicles</span>
      <span className="ml-[25px] mt-[3px]">4</span>
      <div className="ml-auto"><Dots /></div>
    </div>
    <div className="flex h-[94px] border-b-2 border-[#ececec]">
      {statuses.map((s, i) => (
        <div key={i} className={`flex w-[83px] flex-col items-center pt-[13px] ${i === 3 ? 'border-b-[3px] border-[#164273] h-[94px]' : ''}`}>
          <div className={`flex h-[39px] w-[40px] items-center justify-center rounded-[3px] ${s.box}`}>{s.el}</div>
          <span className="mt-[6px] text-[21px] leading-[24px] text-[#8f8f8f]">{s.count}</span>
        </div>
      ))}
    </div>
    <div className="flex h-[96px] items-center border-b-2 border-[#ececec] px-[17px]">
      <div className="flex h-[62px] flex-1 items-center justify-between rounded-[6px] border-2 border-[#ececec] pl-[15px] pr-[14px] text-[24px] text-[#8f8f8f]">
        <span className="mt-[3px]">Search</span>
        <Search size={26} strokeWidth={1.800} className="text-[#222222]" />
      </div>
    </div>
    <div className="flex h-[48px] items-center border-b-2 border-[#ececec] pl-[138px] pr-[13px] text-[21px] text-[#8a8a8a]">
      <span className="font-light">Vehicle name</span>
      <span className="ml-auto mr-[13px] font-light">Speed</span>
      <Dots />
    </div>
    {vehicles.map((v) => (
      <div key={v.name} className={`relative flex h-[110px] items-center pl-[36px] ${v.active ? 'bg-[#fafafa]' : ''}`}>
        <div className="flex h-[64px] w-[64px] shrink-0 items-center justify-center rounded-full bg-[#1c71ad]">
          {v.car ? <Car className="h-[26px] w-[42px]" /> : <Wheel className="h-[42px] w-[42px]" />}
        </div>
        <div className="ml-[38px] flex h-full flex-1 items-center border-b-2 border-[#ececec] pr-[17px]">
          <div className="flex-1 pt-[2px]">
            <div className="text-[24px] leading-[28px] text-[#2b2b2b]">{v.name}</div>
            <div className="text-[21px] leading-[24px] text-[#8f8f8f]">{v.place}</div>
          </div>
          <span className="mt-[2px] text-[21px] text-[#8f8f8f]">0 km/h</span>
        </div>
        {v.active && <div className="absolute right-0 top-0 h-full w-[8px] bg-[#164273]" />}
      </div>
    ))}
  </div>
);

const DetailPanel = () => (
  <div className="relative z-10 flex w-[582px] flex-col bg-white shadow-[0_0_8px_rgba(0,0,0,0.12)]">
    <PanelHeader title="Test Vehicle - Vons Smart" pad="pl-[32px]" />
    <div className="flex h-[74px] border-b-2 border-[#ececec] text-[#666666]">
      <div className="flex w-[97px] items-center justify-center border-b-[3px] border-[#164273] pr-[2px] text-[#164273]">
        <svg viewBox="0 0 32 32" fill="none" stroke="currentColor" strokeWidth={2.500} className="h-[34px] w-[32px]">
          <rect x="5" y="2" width="22" height="28" rx="2" />
          <path d="M10 8h12M10 13h12M10 18h12M10 23h12" />
        </svg>
      </div>
      <div className="flex w-[97px] items-center justify-center pr-[2px]"><IconClock /></div>
      <div className="flex w-[97px] items-center justify-center pr-[2px]"><IconDocs /></div>
      <div className="flex w-[97px] items-center justify-center pr-[2px]"><IconPump /></div>
      <div className="flex w-[97px] items-center justify-center pr-[2px]"><IconTools /></div>
      <div className="flex w-[97px] items-center justify-center pr-[2px]"><IconPlug /></div>
    </div>
    <div className="flex flex-1">
      <div className="flex flex-1 flex-col">
        <div className="flex h-[64px] border-b-2 border-[#ececec] pl-[32px]">
          <span className="flex flex-1 items-center text-[25.600px] text-[#2b2b2b]">Summary</span>
          <div className="flex w-[64px] items-center justify-center border-l-2 border-[#ececec]"><Dots className="bg-[#555555]" /></div>
        </div>
        <div className="flex h-[138px] border-b-2 border-[#ececec] pl-[40px] pt-[24px]">
          <svg viewBox="0 0 24 32" className="mt-[3px] h-[32px] w-[24px] shrink-0" fill="#164273">
            <path d="M12 0c6 0 10 4.500 10 10 0 6-6 12-10 17C8 22 2 16 2 10 2 4.500 6 0 12 0Z" />
            <circle cx="12" cy="10" r="3.500" fill="#fff" />
            <rect x="0" y="29" width="24" height="3" />
          </svg>
          <div className="ml-[23px] w-[370px]">
            <div className="text-[25.700px] leading-[30px] text-[#2b2b2b]">Petaling Jaya, Selangor, 47400, Malaysia</div>
            <div className="mt-[3px] text-[21px] leading-[28px] text-[#8f8f8f]">3.1360533, 101.6155016</div>
          </div>
        </div>
        {details.map((d) => (
          <div key={d.label} className={`flex items-center justify-between border-b-2 border-[#ececec] pl-[32px] pr-[32px] pt-[3px] ${d.h}`}>
            <span className="text-[21px] font-light text-[#8f8f8f]">{d.label}</span>
            <span className="flex items-center gap-[8px] text-[25.700px] text-[#2b2b2b]">
              {d.value}
              {d.info && <span className="flex h-[25px] w-[25px] items-center justify-center rounded-full bg-[#9a9a9a] font-serif text-[16px] font-bold italic text-white">i</span>}
            </span>
          </div>
        ))}
      </div>
      <div className="w-[14px]">
        <div className="h-[739px] rounded-t-[4px] bg-[#c8c8c8]" />
      </div>
    </div>
    <div className="flex h-[108px] shrink-0 items-center justify-center bg-[#f0f0f0] pt-[2px]">
      <div className="-ml-[1px] flex h-[60px] w-[190px] items-center justify-center rounded-[6px] bg-[#164273] text-[19.500px] text-white">Vehicle details</div>
    </div>
  </div>
);

const MapPane = () => (
  <div className="relative flex-1 overflow-hidden">
    <MapDrawing />
    {/* vehicle tag */}
    <div className="absolute left-[135px] top-[444px] flex h-[46px] w-[330px] overflow-hidden rounded-[10px] bg-[#1c71ad] text-white">
      <div className="flex w-[62px] items-center justify-center bg-[#3496d9]"><Wheel className="h-[36px] w-[36px]" /></div>
      <span className="flex items-center pl-[13px] text-[21px]">Test Vehicle - Vons Smart</span>
    </div>
    {/* controls */}
    <div className="absolute left-[528px] top-[16px] flex h-[63px] w-[62px] items-center justify-center bg-white text-[#555555] shadow-[0_1px_3px_rgba(0,0,0,0.15)]">
      <svg viewBox="0 0 30 32" fill="none" stroke="currentColor" strokeWidth={3} className="h-[32px] w-[30px]"><path d="M1 10V2h9M20 2h9v8M29 22v8h-9M10 30H1v-8" /></svg>
    </div>
    <div className="absolute left-[528px] top-[110px] flex h-[128px] w-[62px] flex-col bg-white text-[#555555] shadow-[0_1px_3px_rgba(0,0,0,0.15)]">
      <div className="flex h-[64px] items-center justify-center"><svg viewBox="0 0 28 28" stroke="currentColor" strokeWidth={3.500} className="h-[28px] w-[28px]"><path d="M14 0v28M0 14h28" /></svg></div>
      <div className="mx-[8px] h-[2px] bg-[#e6e6e6]" />
      <div className="flex flex-1 items-center justify-center"><svg viewBox="0 0 28 4" stroke="currentColor" strokeWidth={4} className="h-[4px] w-[28px]"><path d="M0 2h28" /></svg></div>
    </div>
    <div className="absolute left-[528px] top-[252px] flex h-[62px] w-[62px] items-center justify-center bg-white shadow-[0_1px_3px_rgba(0,0,0,0.15)]">
      <svg viewBox="0 0 28 48" className="h-[48px] w-[28px]">
        <circle cx="14" cy="7" r="7" fill="#fbb321" />
        <path d="M6 15h16l4 16h-4v-8l-1 25h-5l-2-17-2 17H7L6 23v8H2Z" fill="#f9a825" stroke="#c98a12" strokeWidth={0.800} />
        <path d="M11 15h6l-3 8Z" fill="#e3761c" />
      </svg>
    </div>
    <div className="absolute left-[528px] top-[367px] flex h-[63px] w-[62px] items-center justify-center bg-white text-[#555555] shadow-[0_1px_3px_rgba(0,0,0,0.15)]">
      <IconRoute />
    </div>
    <div className="absolute left-[548px] top-[446px] flex h-[43px] w-[42px] items-center justify-center bg-white text-[#555555] shadow-[0_1px_3px_rgba(0,0,0,0.15)]">
      <svg viewBox="0 0 20 24" fill="currentColor" className="h-[24px] w-[20px]">
        <rect x="4" y="0" width="12" height="24" rx="3" />
        <path d="M0 3h4v4zM20 3h-4v4zM0 10h4v4zM20 10h-4v4zM0 17h4v4zM20 17h-4v4z" />
        <circle cx="10" cy="4.500" r="2.200" fill="#fff" />
        <circle cx="10" cy="12" r="2.200" fill="#fff" />
        <circle cx="10" cy="19.500" r="2.200" fill="#fff" />
      </svg>
    </div>
    <div className="absolute left-[548px] top-[506px] flex h-[43px] w-[42px] items-center justify-center bg-white text-[#777777] shadow-[0_1px_3px_rgba(0,0,0,0.15)]">
      <svg viewBox="0 0 24 26" fill="none" stroke="currentColor" strokeWidth={1.200} className="h-[26px] w-[24px]">
        <path d="M1 1h22v6H7v18H1Z" />
        <path d="M10 1v3M13 1v3M16 1v3M19 1v3M1 11h3M1 14h3M1 17h3M1 20h3" />
      </svg>
    </div>
    <div className="absolute left-[548px] top-[566px] flex h-[43px] w-[42px] items-center justify-center bg-white text-[#555555] shadow-[0_1px_3px_rgba(0,0,0,0.15)]">
      <Ic className="h-[26px] w-[26px]" sw={1.800}><PolyPaths /></Ic>
    </div>
    {/* street view thumb */}
    <div className="absolute left-[507px] top-[900px] h-[16px] w-[83px]">
      <div className="mb-[3px] ml-[14px] h-[3px] w-[60px] bg-[#8da6c9]" />
      <div className="mb-[3px] ml-[8px] h-[4px] w-[70px] bg-[#8da6c9]" />
      <div className="ml-[4px] h-[3px] w-[79px] bg-[#d5dfe8]" />
    </div>
    <div className="absolute left-[507px] top-[916px] h-[81px] w-[83px] overflow-hidden rounded-[3px] border-[3px] border-white bg-[#7fd3e8]">
      <svg viewBox="0 0 83 81" className="absolute inset-0 h-full w-full">
        <path d="M36 81c5-15-5-25 6-35 5-10 10-20 20-25 6-5 14-15 21-18v78Z" fill="#b7d9c6" />
        <path d="M8 60c5-5 12-8 14-2-3 6-10 8-14 2Z" fill="#b7d9c6" />
      </svg>
      <span className="absolute -bottom-[1px] left-[14px] text-[20px] leading-[24px] text-white">Street</span>
    </div>
    {/* attribution strip */}
    <div className="absolute bottom-0 left-0 flex h-[15px] w-full items-center whitespace-nowrap bg-white/70 text-[16px] leading-[15px] text-[#111111]">
      <span className="-ml-[3px] w-[49px]">cuts</span>
      <span className="w-[196px]">Map data ©2025 Google</span>
      <span className="w-[42px]">1 km</span>
      <span className="h-[8px] w-[87px] border-x-[3px] border-b-[3px] border-[#111111]" />
      <span className="ml-[11px] h-[15px] w-[1px] bg-[#aaaaaa]" />
      <span className="ml-[9px] w-[64px]">Terms</span>
      <span>Report a map error</span>
    </div>
  </div>
);

export default function App() {
  return (
    <div className="h-[1455px] overflow-hidden bg-white pl-[175px] pt-[45px] font-[Roboto,sans-serif]">
      <div className="flex h-[1187px] w-[1852px] flex-col overflow-hidden rounded-[16px] shadow-[0_45px_70px_rgba(0,0,0,0.24)]">
        <TitleBar />
        <TopBar />
        <div className="flex flex-1 overflow-hidden">
          <Sidebar />
          <FleetPanel />
          <DetailPanel />
          <MapPane />
        </div>
      </div>
    </div>
  );
}
